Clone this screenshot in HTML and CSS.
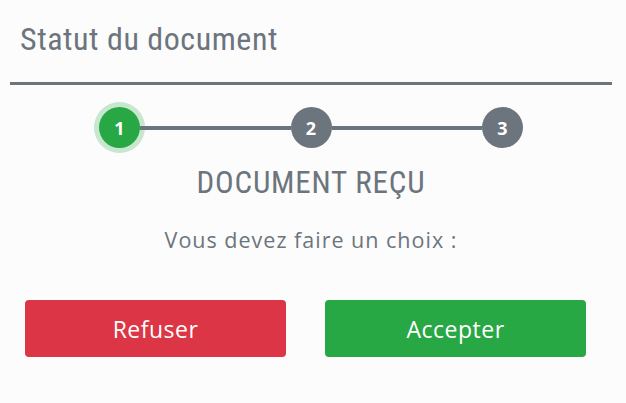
FILE: index.html
```html
<!DOCTYPE html>
<html lang="fr">
<head>
<meta charset="utf-8">
<link rel="stylesheet" href="styles.css">
</head>
<body>
<div class="card">
  <h1 class="title">Statut du document</h1>
  <div class="rule"></div>
  <div class="stepper">
    <span class="step active">1</span>
    <span class="bar"></span>
    <span class="step">2</span>
    <span class="bar"></span>
    <span class="step">3</span>
  </div>
  <h2 class="status">DOCUMENT REÇU</h2>
  <p class="prompt">Vous devez faire un choix :</p>
  <div class="actions">
    <button class="btn btn-danger">Refuser</button>
    <button class="btn btn-success">Accepter</button>
  </div>
</div>
</body>
</html>
```

FILE: styles.css
```css
html, body {
  margin: 0;
  padding: 0;
  background: #fcfcfc;
}
body {
  font-family: "Open Sans", "Noto Sans", sans-serif;
  color: #6c757d;
}
.card {
  width: 602px;
  margin-left: 10px;
}
.title {
  margin: 0;
  padding: 19px 0 0 10px;
  height: 82px;
  box-sizing: border-box;
  font-family: "Roboto Condensed", "Roboto", sans-serif;
  font-stretch: 87.5%;
  font-size: 32px;
  line-height: 40px;
  font-weight: 400;
  letter-spacing: 0.55px;
}
.rule {
  height: 3px;
  background: #6c757d;
}
.stepper {
  display: flex;
  align-items: center;
  width: 424px;
  margin: 22px auto 0;
}
.step {
  width: 41px;
  height: 41px;
  flex: none;
  border-radius: 50%;
  background: #6c757d;
  color: #fff;
  font-weight: 700;
  font-size: 18px;
  display: flex;
  align-items: center;
  justify-content: center;
}
.step.active {
  background: #28a745;
  box-shadow: 0 0 0 5px rgba(40, 167, 69, 0.25);
}
.bar {
  flex: 1;
  height: 4px;
  background: #6c757d;
}
.status {
  margin: 16px 0 0;
  text-align: center;
  font-family: "Roboto Condensed", "Roboto", sans-serif;
  font-stretch: 87.5%;
  font-size: 31px;
  line-height: 38px;
  font-weight: 400;
  letter-spacing: 0.8px;
}
.prompt {
  margin: 24px 0 0;
  text-align: center;
  font-size: 21.5px;
  line-height: 28px;
  letter-spacing: 1px;
}
.actions {
  display: grid;
  grid-template-columns: 261px 261px;
  column-gap: 39px;
  padding-left: 15px;
  margin-top: 46px;
}
.btn {
  height: 57px;
  border: none;
  border-radius: 4px;
  color: #fff;
  font-family: "Open Sans", "Noto Sans", sans-serif;
  font-size: 23px;
  letter-spacing: 0.5px;
  padding: 0;
}
.btn-danger { background: #dc3545; }
.btn-success { background: #28a745; }
```
